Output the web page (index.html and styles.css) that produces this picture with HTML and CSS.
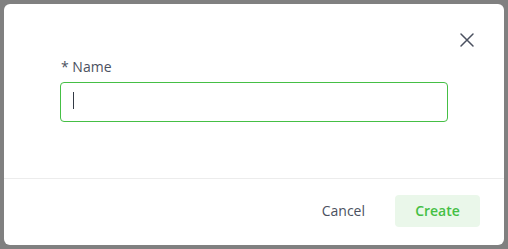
FILE: index.html
```html
<!DOCTYPE html>
<html lang="en">
<head>
<meta charset="utf-8">
<title>Create</title>
<link rel="stylesheet" href="styles.css">
</head>
<body>
<div class="modal">
  <div class="modal-header">
    <button class="close" aria-label="Close">
      <svg width="16" height="16" viewBox="0 0 16 16"><path d="M2 2 L14 14 M14 2 L2 14" stroke="#4b5160" stroke-width="1.5" stroke-linecap="round" fill="none"/></svg>
    </button>
  </div>
  <div class="modal-body">
    <label class="label" for="name">* Name</label>
    <div class="input"><span class="caret"></span></div>
  </div>
  <div class="modal-footer">
    <button class="btn btn-cancel">Cancel</button>
    <button class="btn btn-create">Create</button>
  </div>
</div>
</body>
</html>
```

FILE: styles.css
```css
html, body {
  margin: 0;
  padding: 0;
}
body {
  background: #808080;
  width: 508px;
  height: 249px;
  padding: 4px;
  box-sizing: border-box;
  font-family: "Open Sans", "Noto Sans", sans-serif;
  overflow: hidden;
}
.modal {
  width: 500px;
  height: 241px;
  background: #ffffff;
  border-radius: 6px;
  display: flex;
  flex-direction: column;
  box-sizing: border-box;
}
.modal-header {
  display: flex;
  justify-content: flex-end;
  padding: 28px 29px 0 0;
  height: 16px;
}
.close {
  border: 0;
  background: none;
  padding: 0;
  width: 16px;
  height: 16px;
  display: block;
}
.close svg { display: block; }
.modal-body {
  padding: 9px 56px 56px 56px;
  display: flex;
  flex-direction: column;
}
.label {
  font-size: 14px;
  line-height: 20px;
  font-weight: 500;
  color: #4b5160;
  padding-left: 1px;
  margin-bottom: 5px;
}
.input {
  width: 388px;
  height: 40px;
  box-sizing: border-box;
  border: 1px solid #45bf45;
  border-radius: 4px;
  padding: 9px 12px;
}
.caret {
  display: block;
  width: 1px;
  height: 17px;
  background: #333a45;
}
.modal-footer {
  border-top: 1px solid #ececec;
  display: flex;
  justify-content: flex-end;
  align-items: center;
  gap: 14px;
  padding: 16px 24px 0 0;
}
.btn {
  font-family: "Open Sans", "Noto Sans", sans-serif;
  font-size: 14px;
  height: 32px;
  border: 0;
  border-radius: 4px;
  cursor: pointer;
  padding-bottom: 2px;
}
.btn-cancel {
  background: none;
  color: #4b5160;
  font-weight: 500;
  padding-left: 15px;
  padding-right: 16px;
}
.btn-create {
  background: #eaf7ea;
  color: #45bf45;
  font-weight: 600;
  width: 85px;
  padding-left: 0;
  padding-right: 0;
}
```
